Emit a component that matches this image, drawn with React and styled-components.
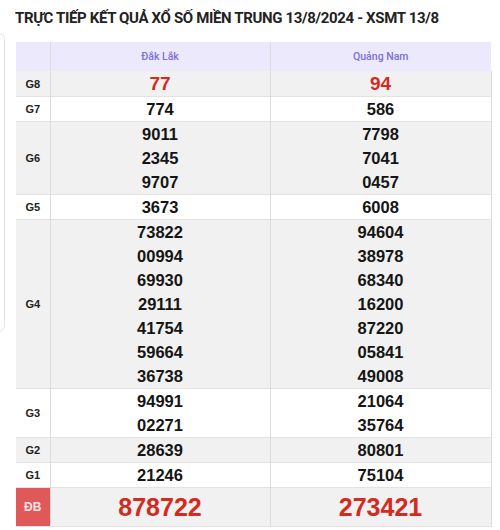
import React from 'react';
import styled, { createGlobalStyle } from 'styled-components';

const GlobalStyle = createGlobalStyle`
    html, body {
        margin: 0;
        padding: 0;
        background: #fff;
    }
    body {
        font-family: "Liberation Sans", Arial, sans-serif;
        color: #111;
    }
`;

const results = [
    { label: 'G8', a: ['77'], b: ['94'], kind: 'g8' },
    { label: 'G7', a: ['774'], b: ['586'] },
    { label: 'G6', a: ['9011', '2345', '9707'], b: ['7798', '7041', '0457'] },
    { label: 'G5', a: ['3673'], b: ['6008'] },
    {
        label: 'G4',
        a: ['73822', '00994', '69930', '29111', '41754', '59664', '36738'],
        b: ['94604', '38978', '68340', '16200', '87220', '05841', '49008'],
    },
    { label: 'G3', a: ['94991', '02271'], b: ['21064', '35764'] },
    { label: 'G2', a: ['28639'], b: ['80801'] },
    { label: 'G1', a: ['21246'], b: ['75104'] },
    { label: 'ĐB', a: ['878722'], b: ['273421'], kind: 'db' },
];

const Page = styled.div`
    position: relative;
    width: 500px;
    height: 530px;
    overflow: hidden;
    padding-top: 8px;
    box-sizing: border-box;
`;

// faint edge of a panel behind the table
const SideFrame = styled.div`
    position: absolute;
    left: -12px;
    top: 33px;
    width: 15px;
    height: 297px;
    border: 1px solid #e4e4e4;
    border-radius: 6px;
`;

const Title = styled.h1`
    margin: 0 0 0 15px;
    font-family: Roboto, "Liberation Sans", sans-serif;
    font-size: 15px;
    letter-spacing: -0.35px;
    font-weight: 700;
    color: #222;
    line-height: 20px;
    white-space: nowrap;
`;

const Table = styled.table`
    margin: 14px 0 0 16px;
    width: 475px;
    border-collapse: collapse;
    table-layout: fixed;
`;

const HeadCell = styled.th`
    background: #ece9fc;
    height: 29px;
    padding: 0;
    font-family: Roboto, "Liberation Sans", sans-serif;
    font-size: 10.5px;
    font-weight: 500;
    color: #7d6fd8;
    border-left: 1px solid #dcdcdc;
    &:first-child {
        border-left: none;
    }
`;

const Row = styled.tr`
    background: ${p => (p.$odd ? '#f1f1f1' : '#fff')};
    border-bottom: 1px solid #e2e2e2;
`;

const Label = styled.td`
    padding: 0;
    text-align: center;
    font-weight: 700;
    background: ${p => (p.$db ? '#e05858' : 'transparent')};
    color: ${p => (p.$db ? '#fbe3e3' : '#222')};
    font-size: ${p => (p.$db ? '12px' : '11px')};
`;

const Cell = styled.td`
    padding: 0;
    text-align: center;
    border-left: 1px solid #dcdcdc;
    &:last-child {
        border-right: 1px solid #dcdcdc;
    }
`;

const Num = styled.div`
    font-weight: 700;
    font-size: ${p => (p.$kind === 'db' ? '25px' : p.$kind === 'g8' ? '19px' : '16.5px')};
    line-height: ${p => (p.$kind === 'db' ? '38px' : p.$kind === 'g8' ? '25px' : '24px')};
    color: ${p => (p.$kind ? '#d42a20' : '#151515')};
`;

const App = () => {
    return (
        <Page>
            <GlobalStyle />
            <SideFrame />
            <Title>TRỰC TIẾP KẾT QUẢ XỔ SỐ MIỀN TRUNG 13/8/2024 - XSMT 13/8</Title>
            <Table>
                <colgroup>
                    <col style={{ width: 34 }} />
                    <col style={{ width: 220 }} />
                    <col style={{ width: 221 }} />
                </colgroup>
                <thead>
                    <tr>
                        <HeadCell></HeadCell>
                        <HeadCell>Đắk Lắk</HeadCell>
                        <HeadCell>Quảng Nam</HeadCell>
                    </tr>
                </thead>
                <tbody>
                    {results.map((r, i) => (
                        <Row key={r.label} $odd={i % 2 === 0}>
                            <Label $db={r.kind === 'db'}>{r.label}</Label>
                            <Cell>
                                {r.a.map(n => <Num key={n} $kind={r.kind}>{n}</Num>)}
                            </Cell>
                            <Cell>
                                {r.b.map(n => <Num key={n} $kind={r.kind}>{n}</Num>)}
                            </Cell>
                        </Row>
                    ))}
                </tbody>
            </Table>
        </Page>
    );
};

export default App;
